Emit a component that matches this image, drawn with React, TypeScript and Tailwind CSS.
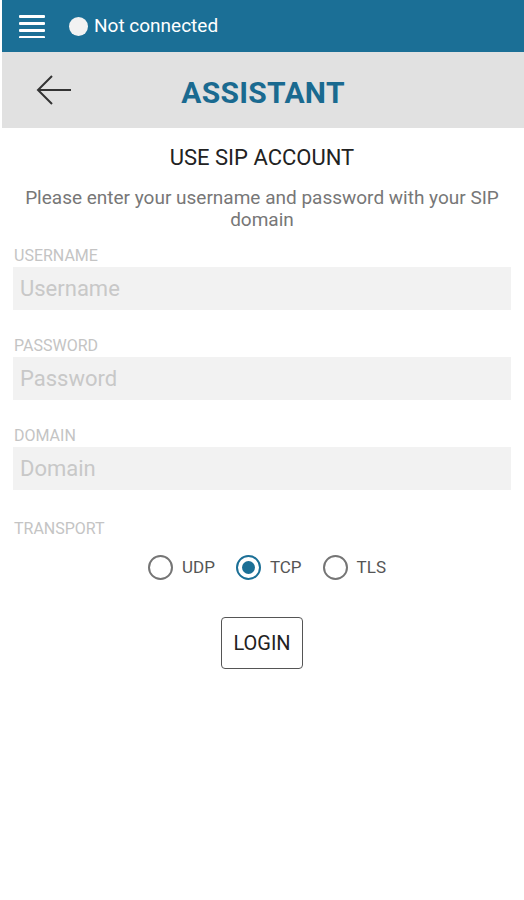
export default function App() {
  const radios = [
    { label: 'UDP', checked: false },
    { label: 'TCP', checked: true },
    { label: 'TLS', checked: false },
  ]
  const fields = ['Username', 'Password', 'Domain']

  return (
    <div className="w-[524px] h-[900px] bg-white font-['Roboto',sans-serif] overflow-hidden">
      {/* Status bar */}
      <div className="h-[52px] bg-[#1b6f96] flex items-center pl-[17px] border-l-2 border-white">
        <svg width="26" height="24" viewBox="0 0 26 24" className="text-white">
          <rect x="0" y="1" width="26" height="3" rx="1" fill="currentColor" />
          <rect x="0" y="8" width="26" height="3" rx="1" fill="currentColor" />
          <rect x="0" y="15" width="26" height="3" rx="1" fill="currentColor" />
          <rect x="0" y="22" width="26" height="2.5" rx="1" fill="currentColor" />
        </svg>
        <div className="ml-[24px] w-[19px] h-[19px] rounded-full bg-[#f2f2f2]" />
        <span className="ml-[6px] text-[19px] text-white pt-[1px]">Not connected</span>
      </div>

      {/* Header */}
      <div className="h-[76px] bg-[#e1e1e1] flex items-center relative border-l-2 border-white">
        <svg width="38" height="34" viewBox="0 0 38 34" className="ml-[33px] text-[#333]">
          <path d="M36 17H3M17 3L3 17l14 14" fill="none" stroke="currentColor" strokeWidth="2" />
        </svg>
        <div className="absolute inset-0 flex items-center justify-center pt-[5px]">
          <span className="text-[30px] font-bold text-[#1a6a90] tracking-[0.3px]">ASSISTANT</span>
        </div>
      </div>

      {/* Content */}
      <div className="flex flex-col items-center">
        <div className="mt-[17px] text-[22px] text-[#222] leading-[26px]">USE SIP ACCOUNT</div>
        <div className="mt-[16px] text-[19px] text-[#777] leading-[22px] text-center px-[18px]">
          Please enter your username and password with your SIP domain
        </div>
      </div>

      <div className="px-[13px] mt-[16px] flex flex-col gap-[27px]">
        {fields.map((f) => (
          <div key={f}>
            <div className="text-[16px] text-[#c4c4c4] leading-[18px] pl-[1px]">{f.toUpperCase()}</div>
            <div className="mt-[2px] h-[43px] bg-[#f2f2f2] flex items-center pl-[7px] text-[22px] text-[#c8c8c8]">
              {f}
            </div>
          </div>
        ))}
        <div className="text-[16px] text-[#c4c4c4] leading-[18px] mt-[3px] pl-[1px]">TRANSPORT</div>
      </div>

      <div className="flex justify-center items-center mt-[17px] gap-[21px] pl-[10px]">
        {radios.map((r) => (
          <div key={r.label} className="flex items-center gap-[9px]">
            {r.checked ? (
              <div className="w-[25px] h-[25px] rounded-full border-2 border-[#1b6f96] flex items-center justify-center">
                <div className="w-[13px] h-[13px] rounded-full bg-[#1b6f96]" />
              </div>
            ) : (
              <div className="w-[25px] h-[25px] rounded-full border-2 border-[#757575]" />
            )}
            <span className="text-[17px] text-[#555]">{r.label}</span>
          </div>
        ))}
      </div>

      <div className="flex justify-center mt-[36px]">
        <div className="w-[82px] h-[52px] border border-[#555] rounded-[4px] flex items-center justify-center text-[20px] text-[#222]">
          LOGIN
        </div>
      </div>
    </div>
  )
}
